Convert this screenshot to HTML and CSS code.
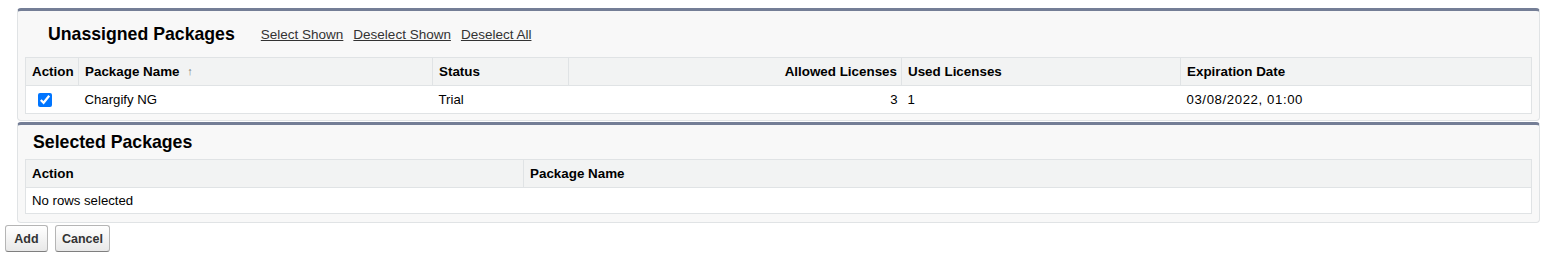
FILE: index.html
```html
<!DOCTYPE html>
<html lang="en">
<head>
    <meta charset="UTF-8">
    <meta name="viewport" content="width=device-width, initial-scale=1.0">
    <title>Add Packages</title>
    <link rel="stylesheet" href="styles.css">
</head>
<body>
    <div class="panels">
        <!-- unassigned packages -->
        <div class="pblock">
            <div class="pbheader first">
                <h2>Unassigned Packages</h2>
                <div class="links">
                    <a href="#">Select Shown</a>
                    <a href="#">Deselect Shown</a>
                    <a href="#">Deselect All</a>
                </div>
            </div>
            <table class="list">
                <colgroup>
                    <col class="c-action">
                    <col class="c-name">
                    <col class="c-status">
                    <col class="c-allowed">
                    <col class="c-used">
                    <col>
                </colgroup>
                <tr class="headrow">
                    <th>Action</th>
                    <th>Package Name <span class="sort">&#8593;</span></th>
                    <th>Status</th>
                    <th class="num">Allowed Licenses</th>
                    <th>Used Licenses</th>
                    <th>Expiration Date</th>
                </tr>
                <tr class="datarow">
                    <td><input type="checkbox" checked></td>
                    <td>Chargify NG</td>
                    <td>Trial</td>
                    <td class="num">3</td>
                    <td>1</td>
                    <td class="date">03/08/2022, 01:00</td>
                </tr>
            </table>
        </div>
        <!-- selected packages -->
        <div class="pblock">
            <div class="pbheader">
                <h2>Selected Packages</h2>
            </div>
            <table class="list">
                <colgroup>
                    <col class="c-action2">
                    <col>
                </colgroup>
                <tr class="headrow">
                    <th>Action</th>
                    <th>Package Name</th>
                </tr>
                <tr class="datarow empty">
                    <td colspan="2">No rows selected</td>
                </tr>
            </table>
        </div>
    </div>
    <div class="buttons">
        <button class="btn">Add</button>
        <button class="btn">Cancel</button>
    </div>
</body>
</html>
```

FILE: styles.css
```css
*{
    box-sizing: border-box;
}
body{
    margin: 0;
    padding: 8px 5px 0 5px;
    font-family: "Liberation Sans", Arial, sans-serif;
    font-size: 13px;
    color: #000;
    background: #fff;
}
.panels{
    margin: 0 12px;
}
.pblock{
    background: #f8f8f8;
    border: 1px solid #e0e3e5;
    border-top: 3px solid #747e96;
    border-radius: 4px;
    padding: 0 7px 6px 7px;
    margin-bottom: 1px;
}
.pblock:last-child{
    padding-bottom: 8px;
}
.pbheader{
    display: flex;
    align-items: center;
    height: 34px;
    padding-left: 8px;
}
.pbheader.first{
    height: 46px;
    padding-left: 23px;
}
.pbheader h2{
    margin: 0;
    font-size: 17.7px;
    font-weight: bold;
}
.links{
    display: flex;
    gap: 10px;
    margin-left: 26px;
}
.links a{
    color: #333;
    text-decoration: underline;
    font-size: 13.5px;
}
.list{
    width: 100%;
    border-collapse: collapse;
    table-layout: fixed;
    border: 1px solid #e0e3e5;
    background: #fff;
}
.c-action{ width: 53px; }
.c-name{ width: 354px; }
.c-status{ width: 136px; }
.c-allowed{ width: 333px; }
.c-used{ width: 279px; }
.c-action2{ width: 498px; }
.headrow th{
    background: #f2f3f3;
    height: 28px;
    padding: 0 4px 0 6px;
    text-align: left;
    font-weight: bold;
    font-size: 13.4px;
    border-left: 1px solid #e0e3e5;
    border-bottom: 1px solid #e0e3e5;
    white-space: nowrap;
}
.headrow th:first-child{
    border-left: none;
}
.datarow td{
    height: 28px;
    padding: 0 4px 0 6px;
    border-bottom: 1px solid #e0e3e5;
    white-space: nowrap;
    font-size: 13.2px;
}
.datarow.empty td{
    height: 26px;
}
.datarow .date{
    letter-spacing: 0.6px;
}
.list .num{
    text-align: right;
}
.sort{
    font-size: 11px;
    font-weight: bold;
    color: #777;
    margin-left: 4px;
    position: relative;
    top: -1px;
}
.datarow input{
    width: 14px;
    height: 14px;
    margin: 0 0 0 6px;
    vertical-align: middle;
}
.buttons{
    display: flex;
    gap: 7px;
    margin-top: 2px;
}
.btn{
    height: 27px;
    min-width: 43px;
    padding: 0 6px;
    font-family: "Liberation Sans", Arial, sans-serif;
    font-size: 12.5px;
    font-weight: bold;
    color: #333;
    background: linear-gradient(#fff, #e8e8e8);
    border: 1px solid #b5b5b5;
    border-bottom-color: #7f7f7f;
    border-radius: 3px;
}
```
